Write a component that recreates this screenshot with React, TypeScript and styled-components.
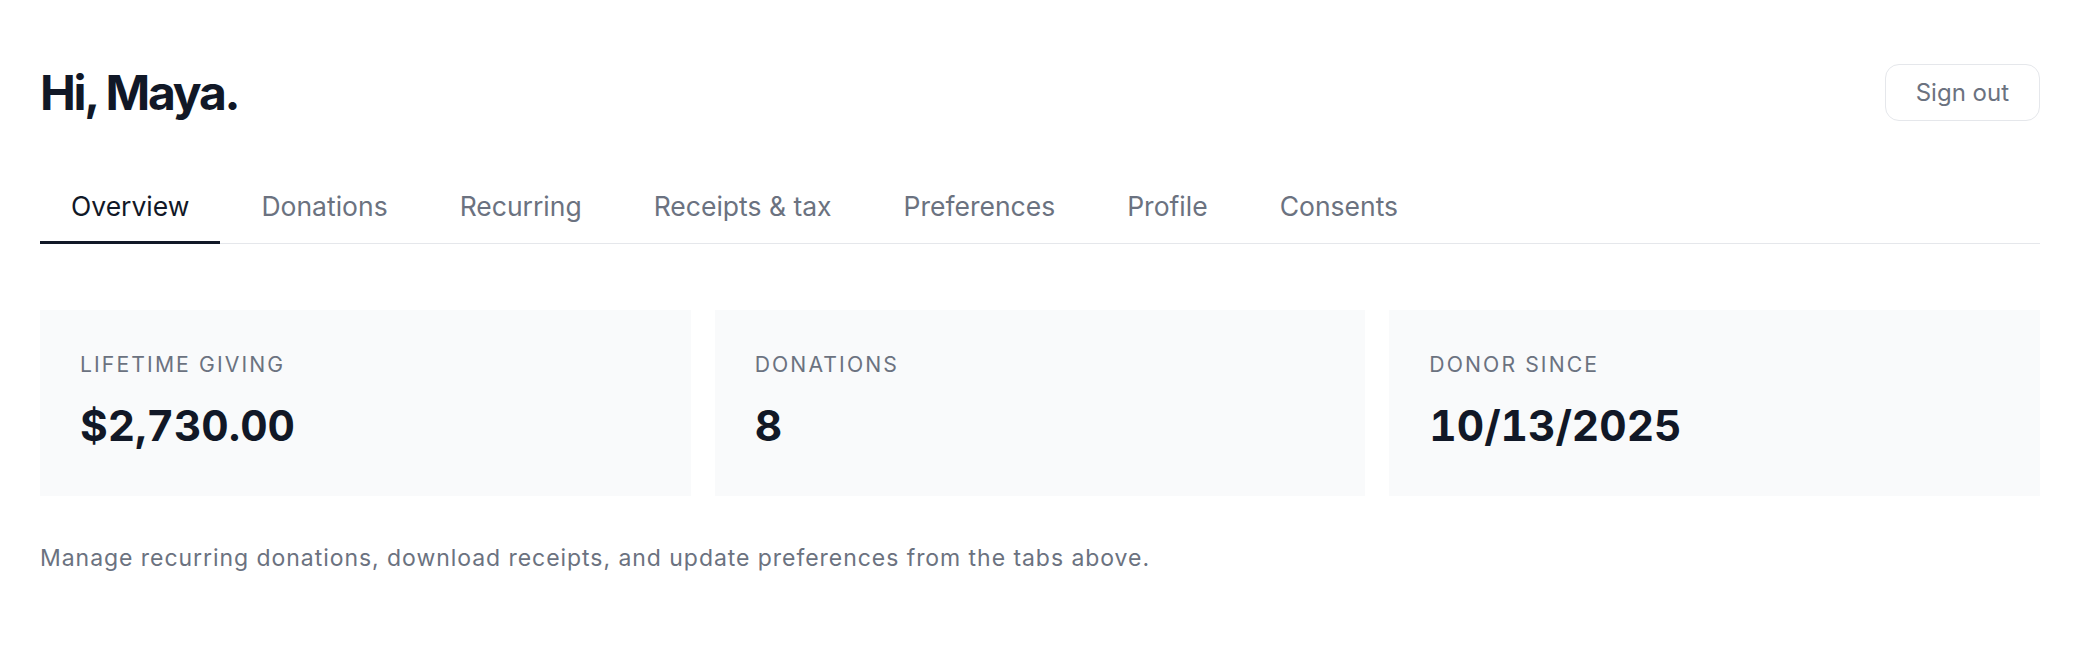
import { useState } from "react";
import { styled, createGlobalStyle } from "styled-components";

const colors = {
  ink: "#111827",
  muted: "#6b7280",
  line: "#e5e7eb",
  panel: "#f9fafb",
  white: "#ffffff",
};

const tabs = [
  "Overview",
  "Donations",
  "Recurring",
  "Receipts & tax",
  "Preferences",
  "Profile",
  "Consents",
];

const stats = [
  { label: "Lifetime giving", value: "$2,730.00" },
  { label: "Donations", value: "8" },
  { label: "Donor since", value: "10/13/2025" },
];

export default function App() {
  const [activeTab, setActiveTab] = useState("Overview");

  return (
    <>
      <GlobalStyle />
      <PageWrapper>
        <Header>
          <Greeting>Hi, Maya.</Greeting>
          <SignoutButton type="button">Sign out</SignoutButton>
        </Header>

        <TabList role="tablist">
          {tabs.map((tab) => (
            <Tab
              key={tab}
              role="tab"
              $active={tab === activeTab}
              aria-selected={tab === activeTab}
              onClick={() => setActiveTab(tab)}
            >
              {tab}
            </Tab>
          ))}
        </TabList>

        <StatGrid>
          {stats.map((stat) => (
            <StatCard key={stat.label}>
              <StatLabel>{stat.label}</StatLabel>
              <StatValue>{stat.value}</StatValue>
            </StatCard>
          ))}
        </StatGrid>

        <HelpText>
          Manage recurring donations, download receipts, and update preferences
          from the tabs above.
        </HelpText>
      </PageWrapper>
    </>
  );
}

const GlobalStyle = createGlobalStyle`
  html, body {
    margin: 0;
    background: ${colors.white};
  }
  body {
    font-family: Inter, "Noto Sans", "Liberation Sans", sans-serif;
    color: ${colors.ink};
    -webkit-font-smoothing: antialiased;
  }
`;

const PageWrapper = styled.main`
  display: flex;
  flex-direction: column;
  padding: 64px 40px 40px;
`;

const Header = styled.header`
  display: flex;
  align-items: center;
  justify-content: space-between;
  margin-bottom: 48px;
`;

const Greeting = styled.h1`
  margin: 0;
  font-size: 48px;
  line-height: 56px;
  font-weight: 700;
  letter-spacing: -2.3px;
  color: ${colors.ink};
`;

const SignoutButton = styled.button`
  height: 57px;
  padding: 0 30px;
  border: 1px solid ${colors.line};
  border-radius: 14px;
  background: ${colors.white};
  color: ${colors.muted};
  font-family: inherit;
  font-size: 24px;
  cursor: pointer;
`;

const TabList = styled.nav`
  display: flex;
  gap: 10px;
  border-bottom: 1px solid ${colors.line};
`;

const Tab = styled.button<{ $active: boolean }>`
  margin-bottom: -1px;
  padding: 17px 31px 15px;
  border: none;
  border-bottom: 3px solid ${(p) => (p.$active ? colors.ink : "transparent")};
  background: none;
  color: ${(p) => (p.$active ? colors.ink : colors.muted)};
  font-family: inherit;
  font-size: 26.5px;
  line-height: 40px;
  cursor: pointer;
`;

const StatGrid = styled.section`
  display: grid;
  grid-template-columns: repeat(3, 1fr);
  gap: 24px;
  margin-top: 66px;
`;

const StatCard = styled.div`
  display: flex;
  flex-direction: column;
  gap: 20px;
  padding: 40px 40px 42px;
  background: ${colors.panel};
`;

const StatLabel = styled.div`
  font-size: 21.2px;
  line-height: 28px;
  letter-spacing: 2.1px;
  text-transform: uppercase;
  color: ${colors.muted};
`;

const StatValue = styled.div`
  font-size: 42.4px;
  line-height: 56px;
  font-weight: 700;
  font-variant-numeric: tabular-nums;
  color: ${colors.ink};
`;

const HelpText = styled.p`
  margin: 46px 0 0;
  font-size: 23px;
  line-height: 33px;
  letter-spacing: 0.95px;
  color: ${colors.muted};
`;
